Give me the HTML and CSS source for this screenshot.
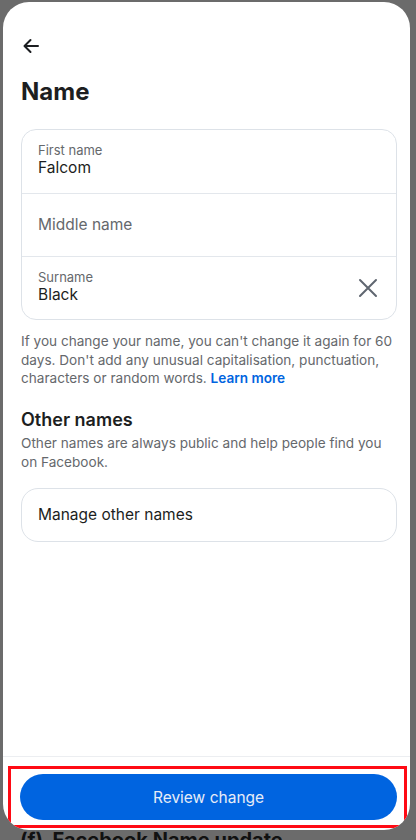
FILE: index.html
```html
<!DOCTYPE html>
<html lang="en">
<head>
<meta charset="utf-8">
<link rel="stylesheet" href="styles.css">
</head>
<body>
<div class="screen">
  <div class="sheet">
    <div class="content">
      <button class="back" aria-label="Back">
        <svg width="20" height="20" viewBox="0 0 20 20"><path d="M17 10H3.5M9.5 4L3.5 10L9.5 16" fill="none" stroke="#1c1e21" stroke-width="2" stroke-linecap="round" stroke-linejoin="round"/></svg>
      </button>
      <h1 class="title">Name</h1>
      <div class="fields">
        <div class="field">
          <div class="field-text filled">
            <span class="label">First name</span>
            <span class="value">Falcom</span>
          </div>
        </div>
        <div class="field">
          <div class="field-text">
            <span class="placeholder">Middle name</span>
          </div>
        </div>
        <div class="field">
          <div class="field-text filled">
            <span class="label">Surname</span>
            <span class="value">Black</span>
          </div>
          <svg class="clear" width="20" height="20" viewBox="0 0 20 20"><path d="M2 2L18 18M18 2L2 18" fill="none" stroke="#5f6670" stroke-width="2" stroke-linecap="round"/></svg>
        </div>
      </div>
      <p class="help">If you change your name, you can't change it again for 60 days. Don't add any unusual capitalisation, punctuation, characters or random words. <a class="link">Learn more</a></p>
      <h2 class="subtitle">Other names</h2>
      <p class="desc">Other names are always public and help people find you on Facebook.</p>
      <div class="manage">Manage other names</div>
    </div>
    <div class="footer">
      <div class="highlight">
        <button class="primary">Review change</button>
      </div>
    </div>
  </div>
  <div class="behind">(f)&nbsp; Facebook Name update</div>
</div>
</body>
</html>
```
FILE: styles.css
```css
* { box-sizing: border-box; }
html, body { margin: 0; padding: 0; }
body {
  width: 416px;
  height: 840px;
  overflow: hidden;
  background: #6b6b6b;
  font-family: Inter, Roboto, "Noto Sans", sans-serif;
  color: #1c1e21;
}
.screen {
  position: relative;
  width: 416px;
  height: 840px;
  padding: 2px 6px 0 3px;
}
.sheet {
  position: relative;
  z-index: 1;
  height: 828px;
  background: #fff;
  border-radius: 26px;
  display: flex;
  flex-direction: column;
  overflow: hidden;
}
.content {
  flex: 1;
  padding: 32px 13px 0 18px;
  display: flex;
  flex-direction: column;
}
.back {
  width: 24px;
  height: 24px;
  padding: 0;
  border: 0;
  background: none;
  display: flex;
  align-items: center;
}
.title {
  margin: 19px 0 0 0;
  font-size: 24px;
  font-weight: 700;
  line-height: 30px;
  color: #1c1e21;
}
.fields {
  margin-top: 22px;
  border: 1px solid #dde2e8;
  border-radius: 15px;
}
.field {
  height: 63px;
  display: flex;
  align-items: center;
  padding: 0 18px 0 16px;
  border-top: 1px solid #e3e7ec;
}
.field:first-child { border-top: 0; }
.field-text {
  flex: 1;
  display: flex;
  flex-direction: column;
}
.field-text.filled { padding-bottom: 4px; }
.label {
  font-size: 13px;
  line-height: 16px;
  color: #65686c;
}
.value {
  font-size: 15.5px;
  line-height: 19px;
  color: #1c1e21;
}
.placeholder {
  font-size: 15.5px;
  line-height: 20px;
  color: #65686c;
}
.clear { display: block; }
.help {
  margin: 12px 0 0 0;
  font-size: 13.6px;
  line-height: 18.5px;
  color: #65686c;
}
.link {
  color: #0064e0;
  font-weight: 600;
}
.subtitle {
  margin: 21px 0 0 0;
  font-size: 18px;
  line-height: 22px;
  font-weight: 600;
  color: #1c1e21;
}
.desc {
  margin: 3px 0 0 0;
  font-size: 13.6px;
  line-height: 19px;
  color: #65686c;
}
.manage {
  margin-top: 16px;
  height: 54px;
  border: 1px solid #dde2e8;
  border-radius: 17px;
  display: flex;
  align-items: center;
  padding-left: 16px;
  font-size: 15.5px;
  color: #1c1e21;
}
.footer {
  border-top: 1px solid #eceef1;
  padding: 9px 3px 2px 5px;
}
.highlight {
  border: 3px solid #ff0a14;
  padding: 5px 7px 5px 9px;
}
.primary {
  width: 100%;
  height: 46px;
  border: 0;
  border-radius: 23px;
  background: #0064e0;
  color: #e6ecf7;
  font-family: Inter, Roboto, "Noto Sans", sans-serif;
  font-size: 15.5px;
}
.behind {
  position: absolute;
  left: 20px;
  top: 828px;
  font-size: 20px;
  font-weight: 700;
  color: #111;
  z-index: 0;
}
```
